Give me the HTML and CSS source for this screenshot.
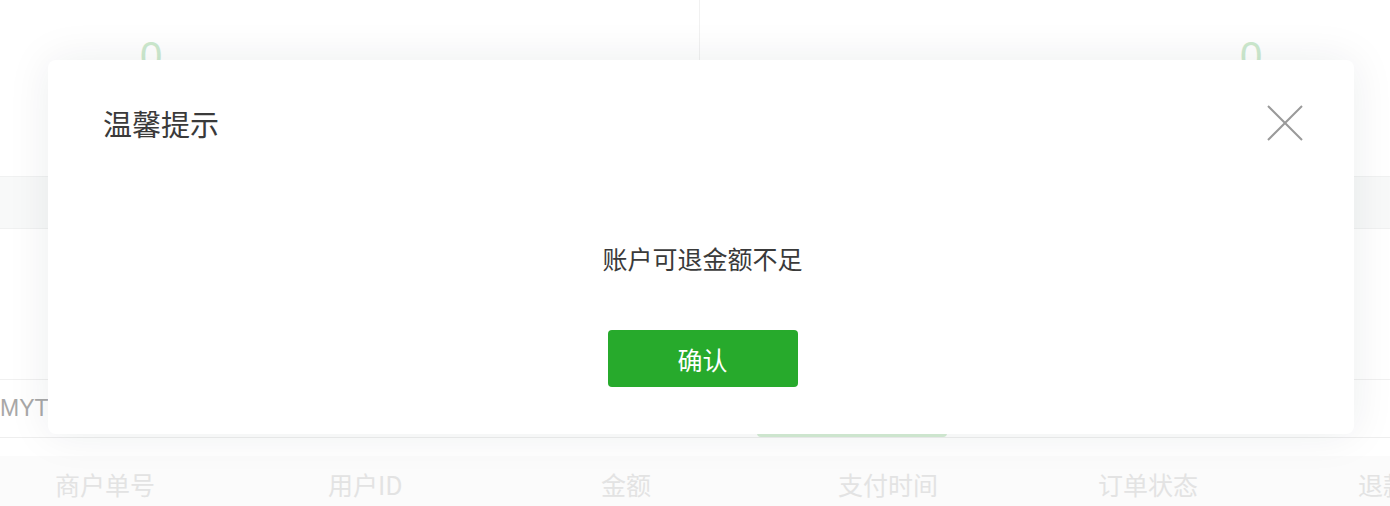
FILE: index.html
```html
<!DOCTYPE html>
<html>
    <head>
        <meta charset="UTF-8">
        <title>订单管理</title>
        <link rel="stylesheet" href="styles.css">
    </head>
    <body>
        <div class="page">
            <div class="stats">
                <div class="stat stat-left"><span class="stat-num">0</span></div>
                <div class="stat stat-right"><span class="stat-num">0</span></div>
            </div>
            <div class="band"></div>
            <div class="gap"></div>
            <div class="search">
                <span class="search-input">MYT2019</span>
                <span class="search-btn"></span>
            </div>
            <div class="table-head">
                <span class="col c1">商户单号</span>
                <span class="col c2">用户ID</span>
                <span class="col c3">金额</span>
                <span class="col c4">支付时间</span>
                <span class="col c5">订单状态</span>
                <span class="col c6">退款</span>
            </div>
        </div>

        <div class="dialog">
            <div class="dialog-head">
                <span class="dialog-title">温馨提示</span>
                <span class="dialog-close">
                    <svg width="36" height="36" viewBox="0 0 36 36">
                        <path d="M1 1 L35 35 M35 1 L1 35" stroke="#9a9a9a" stroke-width="2" fill="none"/>
                    </svg>
                </span>
            </div>
            <p class="dialog-msg">账户可退金额不足</p>
            <button class="dialog-btn">确认</button>
        </div>
    </body>
</html>
```

FILE: styles.css
```css
body{
    margin: 0;
    background: #ffffff;
    font-family: "Liberation Sans", "Noto Sans CJK SC", sans-serif;
    overflow: hidden;
}
.page{
    width: 1390px;
    height: 506px;
    overflow: hidden;
}
.stats{
    display: grid;
    grid-template-columns: 700px 1fr;
    height: 176px;
}
.stat{
    padding-top: 36px;
    box-sizing: border-box;
}
.stat-left{
    padding-left: 140px;
    border-right: 1px solid #f1f1f1;
}
.stat-right{
    padding-left: 540px;
}
.stat-num{
    font-size: 40px;
    line-height: 40px;
    color: #cde9ce;
}
.band{
    height: 51px;
    background: #f8f9f9;
    border-top: 1px solid #f0f1f1;
    border-bottom: 1px solid #f0f1f1;
}
.gap{
    height: 150px;
}
.search{
    display: flex;
    height: 57px;
    border-top: 1px solid #f0f0f0;
    border-bottom: 1px solid #eeeeee;
}
.search-input{
    width: 757px;
    font-size: 23px;
    line-height: 57px;
    color: #a8a8a8;
}
.search-btn{
    width: 190px;
    background: #d5edd5;
    border-radius: 4px;
}
.table-head{
    display: grid;
    grid-template-columns: 273px 273px 237px 260px 260px 1fr;
    margin-top: 18px;
    padding-left: 55px;
    height: 56px;
    background: #fbfbfb;
    font-family: "Noto Sans CJK SC", sans-serif;
    font-size: 25px;
    line-height: 56px;
    color: #e3e3e3;
    white-space: nowrap;
}

.dialog{
    position: absolute;
    left: 48px;
    top: 60px;
    width: 1306px;
    height: 374px;
    box-sizing: border-box;
    padding: 43px 52px 47px 55px;
    background: #ffffff;
    border-radius: 8px;
    box-shadow: 0 0 44px rgba(30, 40, 50, 0.08);
    display: flex;
    flex-direction: column;
    align-items: center;
    font-family: "Noto Sans CJK SC", sans-serif;
}
.dialog-head{
    align-self: stretch;
    display: flex;
    justify-content: space-between;
    align-items: center;
    height: 40px;
}
.dialog-title{
    font-size: 29px;
    line-height: 40px;
    color: #3a3a3a;
}
.dialog-close{
    display: flex;
    margin-right: -1px;
}
.dialog-msg{
    margin: 98px 0 0 0;
    font-size: 25px;
    line-height: 34px;
    color: #3a3a3a;
}
.dialog-btn{
    margin-top: 55px;
    width: 190px;
    height: 57px;
    border: none;
    border-radius: 4px;
    background: #27aa2c;
    color: #ffffff;
    font-family: "Noto Sans CJK SC", sans-serif;
    font-size: 25px;
}
```
